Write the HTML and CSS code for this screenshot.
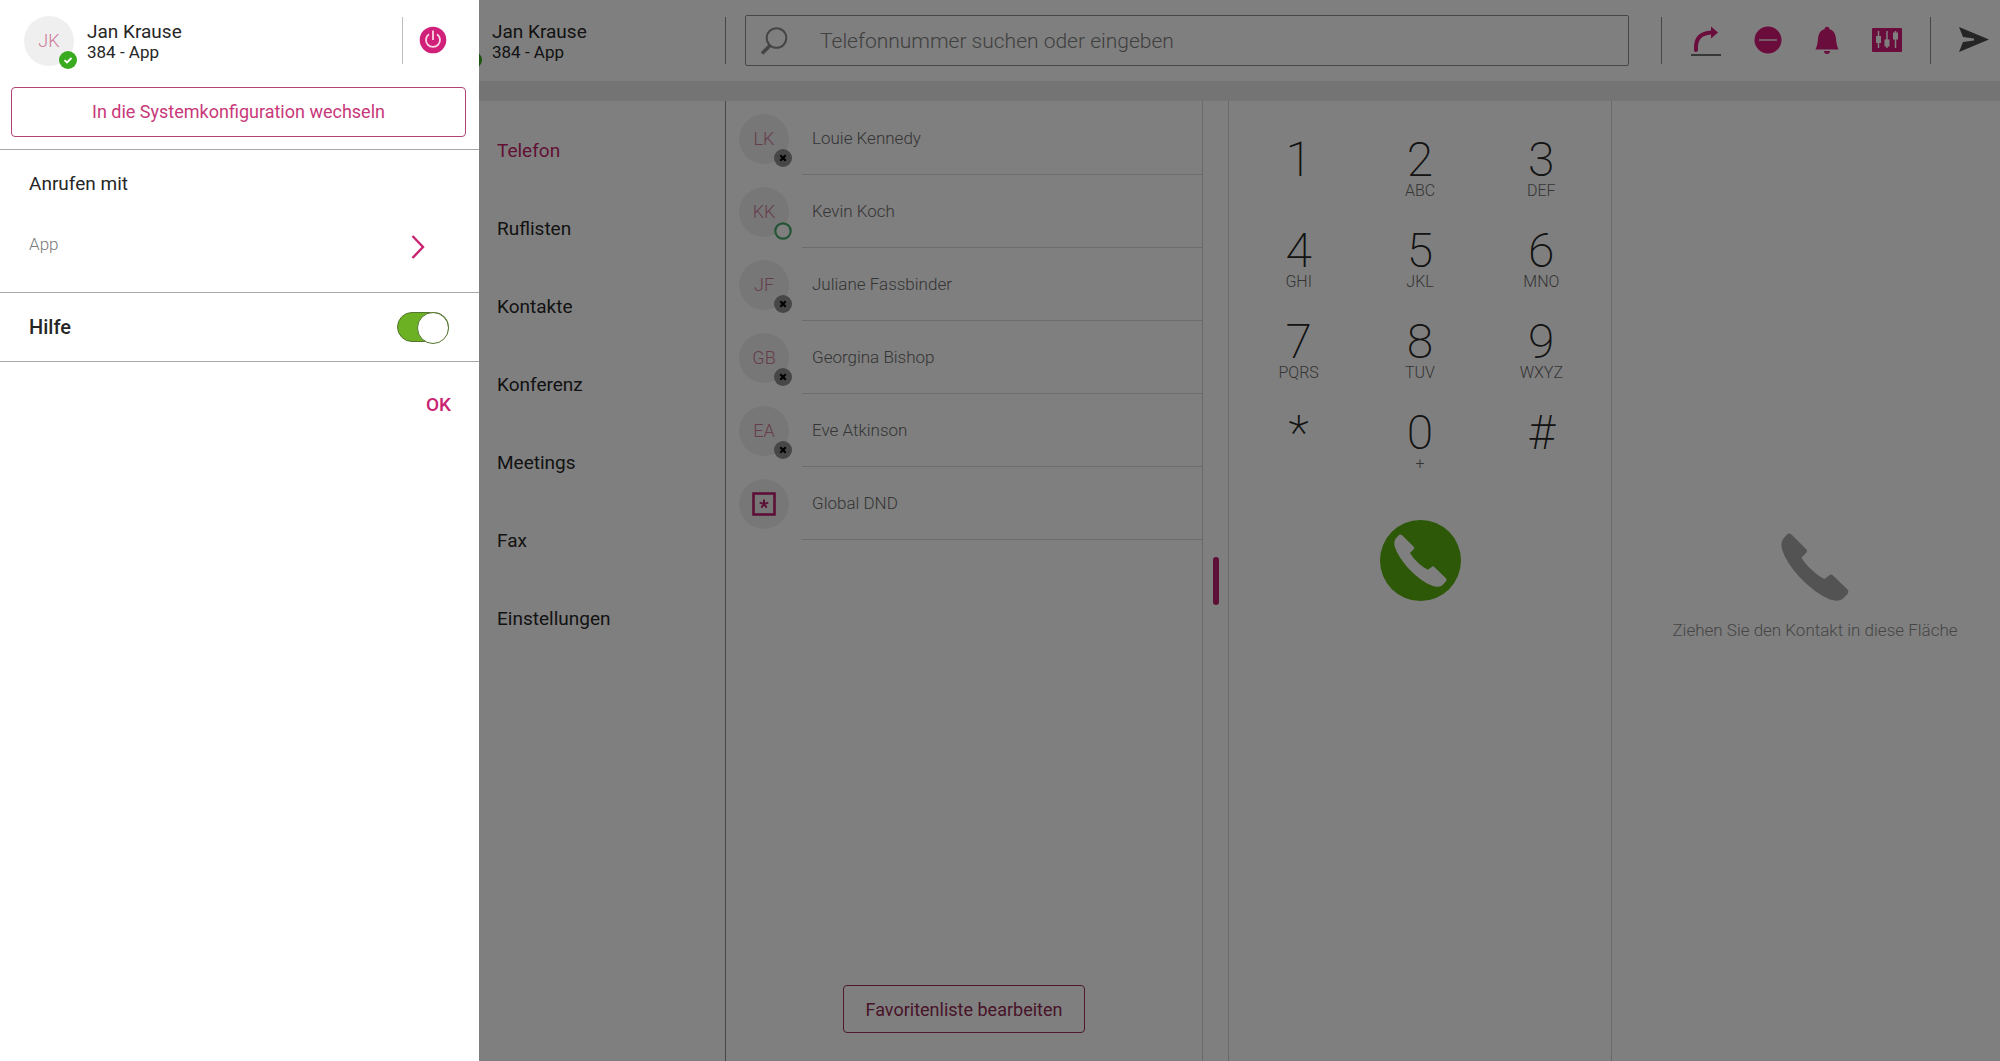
FILE: index.html
```html
<!DOCTYPE html>
<html lang="de">
<head>
    <meta charset="UTF-8">
    <meta name="viewport" content="width=device-width, initial-scale=1.0">
    <title>Telefon</title>
    <link rel="stylesheet" href="styles.css">
</head>
<body>
    <!-- Symbole, die mehrfach vorkommen -->
    <svg class="symbols" aria-hidden="true">
        <symbol id="handset" viewBox="0 0 68 68">
            <path d="M6 1.500Q8-.5 10.500 1.500L25 16Q27 18 25 20L20.500 24.500Q24 31 31.500 37.500Q38 43.500 43.500 46L48 42.500Q50 40.500 52 42.500L66 56Q68.500 58.500 66.500 61L61.500 66Q57 69 49 66.500Q34 60.500 18 43.500Q5 29 1 16.500Q-.5 10 2 6Z"/>
        </symbol>
        <symbol id="offline" viewBox="0 0 18 18">
            <circle cx="9" cy="9" r="9" fill="#8f8f8f"/>
            <path d="M6.300 6.300l5.400 5.400M11.700 6.300l-5.400 5.400" stroke="#000" stroke-width="2.200"/>
        </symbol>
        <symbol id="free" viewBox="0 0 18 18">
            <circle cx="9" cy="9" r="7.700" fill="#fff" stroke="#46a868" stroke-width="2.200"/>
        </symbol>
        <symbol id="online" viewBox="0 0 18 18">
            <circle cx="9" cy="9" r="9" fill="#3aaa20"/>
            <path d="M5.500 9.200l2.500 2.300 4.500-4.500" fill="none" stroke="#fff" stroke-width="1.800"/>
        </symbol>
    </svg>

    <div class="app">
        <header class="topbar">
            <div class="user">
                <span class="avatar">JK<svg class="badge"><use href="#online"/></svg></span>
                <div class="user-text">
                    <div class="user-name">Jan Krause</div>
                    <div class="user-line">384 - App</div>
                </div>
            </div>
            <div class="search">
                <svg width="28" height="28" viewBox="0 0 28 28" fill="none" stroke="#8a8a8a">
                    <circle cx="16.500" cy="11" r="9.800" stroke-width="2"/>
                    <path d="M10 18.500L2 26.500" stroke-width="3.500"/>
                </svg>
                <input type="text" placeholder="Telefonnummer suchen oder eingeben" aria-label="Telefonnummer suchen oder eingeben">
            </div>
            <div class="tools">
                <button type="button" aria-label="Rufumleitung">
                    <svg width="32" height="32" viewBox="0 0 32 32">
                        <path d="M6 26C5 14 11 8.500 23 8.500" fill="none" stroke="#d61a78" stroke-width="4" stroke-linecap="round"/>
                        <path d="M21 2.500L28 8.500L21 14.500Z" fill="#d61a78"/>
                        <path d="M1 31h30" stroke="#6e6e6e" stroke-width="2"/>
                    </svg>
                </button>
                <button type="button" aria-label="Anrufschutz">
                    <svg width="28" height="28" viewBox="0 0 28 28">
                        <circle cx="14" cy="14" r="13.500" fill="#d61a78"/>
                        <path d="M5 14h18" stroke="#f5b0d0" stroke-width="2"/>
                    </svg>
                </button>
                <button type="button" aria-label="Klingel">
                    <svg width="26" height="28" viewBox="-1 0 26 28" fill="#d61a78">
                        <path d="M9.500 3.200a2.500 2.500 0 0 1 5 0C19 4.500 20.500 8 21 12.500C21.300 17.500 22 20 23.500 23.500H.5C2 20 2.700 17.500 3 12.500C3.500 8 5 4.500 9.500 3.200Z"/>
                        <path d="M9 25h6q0 3-3 3t-3-3Z"/>
                    </svg>
                </button>
                <button type="button" aria-label="Audioeinstellungen">
                    <svg width="30" height="24" viewBox="0 0 30 24">
                        <rect x="0" y="0" width="30" height="24" rx="1" fill="#d61a78"/>
                        <path d="M6.500 3v17M15 3v17M23.500 3v17" stroke="#fff" stroke-width="1.500"/>
                        <path d="M4 8h5v7H4zM12.500 11.500h5v7h-5zM21 4.500h5v7h-5z" fill="#fff"/>
                    </svg>
                </button>
            </div>
            <button type="button" class="send" aria-label="Senden">
                <svg width="32" height="26" viewBox="0 0 32 26"><path d="M1 0L31 12.500L1 25L5 15L16 13.500V11.500L5 10Z" fill="#4a4a4a"/></svg>
            </button>
        </header>

        <main class="content">
            <nav class="menu">
                <a href="#" class="active">Telefon</a>
                <a href="#">Ruflisten</a>
                <a href="#">Kontakte</a>
                <a href="#">Konferenz</a>
                <a href="#">Meetings</a>
                <a href="#">Fax</a>
                <a href="#">Einstellungen</a>
            </nav>

            <section class="favorites">
                <ul class="contacts">
                    <li><span class="avatar">LK<svg class="badge"><use href="#offline"/></svg></span><span class="contact-name">Louie Kennedy</span></li>
                    <li><span class="avatar">KK<svg class="badge"><use href="#free"/></svg></span><span class="contact-name">Kevin Koch</span></li>
                    <li><span class="avatar">JF<svg class="badge"><use href="#offline"/></svg></span><span class="contact-name">Juliane Fassbinder</span></li>
                    <li><span class="avatar">GB<svg class="badge"><use href="#offline"/></svg></span><span class="contact-name">Georgina Bishop</span></li>
                    <li><span class="avatar">EA<svg class="badge"><use href="#offline"/></svg></span><span class="contact-name">Eve Atkinson</span></li>
                    <li>
                        <span class="avatar">
                            <svg width="24" height="24" viewBox="0 0 24 24" fill="none" stroke="#b8206a">
                                <rect x="1.500" y="1.500" width="21" height="21" stroke-width="2.600"/>
                                <path d="M12 12V7.500M12 12L7.700 10.600M12 12L16.300 10.600M12 12L9.300 15.700M12 12L14.700 15.700" stroke-width="2"/>
                            </svg>
                        </span>
                        <span class="contact-name">Global DND</span>
                    </li>
                </ul>
                <button type="button" class="outline-button edit-button">Favoritenliste bearbeiten</button>
            </section>

            <div class="splitter"><span class="handle"></span></div>

            <section class="dialer">
                <div class="keys">
                    <button type="button">1<small></small></button>
                    <button type="button">2<small>ABC</small></button>
                    <button type="button">3<small>DEF</small></button>
                    <button type="button">4<small>GHI</small></button>
                    <button type="button">5<small>JKL</small></button>
                    <button type="button">6<small>MNO</small></button>
                    <button type="button">7<small>PQRS</small></button>
                    <button type="button">8<small>TUV</small></button>
                    <button type="button">9<small>WXYZ</small></button>
                    <button type="button">*<small></small></button>
                    <button type="button">0<small>+</small></button>
                    <button type="button">#<small></small></button>
                </div>
                <button type="button" class="call" aria-label="Anrufen">
                    <svg width="53" height="53"><use href="#handset"/></svg>
                </button>
            </section>

            <section class="drop-area">
                <svg width="68" height="68"><use href="#handset"/></svg>
                <p>Ziehen Sie den Kontakt in diese Fläche</p>
            </section>
        </main>
    </div>

    <div class="overlay"></div>

    <aside class="drawer">
        <div class="drawer-head">
            <div class="user">
                <span class="avatar">JK<svg class="badge"><use href="#online"/></svg></span>
                <div class="user-text">
                    <div class="user-name">Jan Krause</div>
                    <div class="user-line">384 - App</div>
                </div>
            </div>
            <button type="button" class="power" aria-label="Abmelden">
                <svg width="28" height="28" viewBox="0 0 28 28">
                    <circle cx="14" cy="14" r="13.300" fill="#d0207a"/>
                    <path d="M10 8.200A7 7 0 1 0 18 8.200M14 4.500V14" fill="none" stroke="#fbd5e6" stroke-width="1.800"/>
                </svg>
            </button>
        </div>
        <button type="button" class="outline-button config-button">In die Systemkonfiguration wechseln</button>
        <section class="call-with">
            <h2>Anrufen mit</h2>
            <button type="button" class="device">
                App
                <svg width="14" height="26" viewBox="0 0 14 26"><path d="M1.500 2L12 13L1.500 24" fill="none" stroke="#c92471" stroke-width="2.400"/></svg>
            </button>
        </section>
        <label class="help">
            Hilfe
            <input type="checkbox" class="toggle" checked>
        </label>
        <button type="button" class="ok">OK</button>
    </aside>
</body>
</html>
```

FILE: styles.css
```css
* {
    box-sizing: border-box;
}

body {
    margin: 0;
    font-family: Roboto, "Liberation Sans", sans-serif;
    font-size: 19px;
    color: #262626;
    background-color: white;
}

button {
    padding: 0;
    border: none;
    background: none;
    font: inherit;
    color: inherit;
    cursor: pointer;
}

svg {
    display: block;
}

.symbols {
    position: absolute;
    width: 0;
    height: 0;
}

/* App */
.app {
    display: flex;
    flex-direction: column;
    min-height: 100vh;
    padding-left: 405px;
}

.topbar {
    display: flex;
    align-items: center;
    height: 81px;
    padding-right: 10px;
}

.user {
    display: flex;
    align-items: center;
    gap: 13px;
    width: 321px;
    height: 47px;
    padding-left: 24px;
    border-right: 1px solid #8c8c8c;
}

.user-name {
    font-size: 19px;
    line-height: 22px;
}

.user-line {
    font-size: 17px;
    line-height: 18px;
}

.avatar {
    position: relative;
    display: flex;
    align-items: center;
    justify-content: center;
    flex: none;
    width: 50px;
    height: 50px;
    border-radius: 50%;
    background-color: #efefef;
    color: #cc7a98;
    font-size: 18px;
    font-weight: 300;
}

.badge {
    position: absolute;
    right: -3px;
    bottom: -3px;
    width: 18px;
    height: 18px;
}

.search {
    display: flex;
    align-items: center;
    flex: 1;
    gap: 32px;
    height: 51px;
    margin-left: 19px;
    padding: 0 14px;
    border: 1px solid #8c8c8c;
    border-radius: 2px;
}

.search input {
    flex: 1;
    min-width: 0;
    padding: 0;
    border: none;
    outline: none;
    font: inherit;
    font-size: 21px;
    font-weight: 300;
}

.search input::placeholder {
    color: #808080;
    opacity: 1;
}

.tools {
    display: flex;
    align-items: center;
    gap: 32px;
    height: 47px;
    margin-left: 32px;
    padding: 0 28px 2px;
    border-left: 1px solid #8c8c8c;
    border-right: 1px solid #8c8c8c;
}

.send {
    margin-left: 27px;
    padding-bottom: 2px;
}

.content {
    display: grid;
    grid-template-columns: 321px 476fr 27px 383fr 388fr;
    flex: 1;
    border-top: 20px solid #e9e9e9;
}

.menu {
    padding: 11px 0 0 92px;
    border-right: 1px solid #8c8c8c;
}

.menu a {
    display: block;
    line-height: 78px;
    color: #262626;
    text-decoration: none;
}

.menu .active {
    color: #c42468;
}

.favorites {
    display: flex;
    flex-direction: column;
    align-items: center;
    justify-content: space-between;
    padding-bottom: 28px;
}

.contacts {
    width: 100%;
    margin: 0;
    padding: 1px 0 0 13px;
    list-style: none;
}

.contacts li {
    display: flex;
    align-items: center;
    gap: 13px;
    height: 73px;
}

.contact-name {
    flex: 1;
    padding-left: 10px;
    border-bottom: 1px solid #d8d8d8;
    color: #6a6a6a;
    font-size: 17px;
    font-weight: 300;
    line-height: 72px;
}

.outline-button {
    border: 1px solid #b04478;
    border-radius: 4px;
    color: #c8387a;
    font-size: 18px;
}

.edit-button {
    height: 48px;
    padding: 0 22px;
    border-color: #a03060;
    color: #902850;
}

.splitter {
    display: flex;
    align-items: center;
    justify-content: center;
    border-left: 1px solid #d2d2d2;
    border-right: 1px solid #d2d2d2;
}

.handle {
    width: 6px;
    height: 48px;
    border-radius: 3px;
    background-color: #b8206a;
}

.dialer {
    display: flex;
    flex-direction: column;
    align-items: center;
    gap: 27px;
    padding: 28px 9px 0;
    border-right: 1px solid #d2d2d2;
}

.keys {
    display: grid;
    grid-template-columns: repeat(3, 1fr);
    width: 100%;
}

.keys button {
    display: flex;
    flex-direction: column;
    align-items: center;
    height: 91px;
    padding-top: 9px;
    font-size: 48px;
    font-weight: 200;
    line-height: 44px;
}

.keys small {
    color: #6a6a6a;
    font-size: 16px;
    font-weight: 300;
    line-height: 18px;
}

.call {
    display: flex;
    align-items: center;
    justify-content: center;
    width: 81px;
    height: 81px;
    border-radius: 50%;
    background-color: #58b010;
    fill: white;
}

.drop-area {
    display: flex;
    flex-direction: column;
    align-items: center;
    justify-content: center;
    gap: 18px;
    padding: 12px 0 0 18px;
    color: #8c8c8c;
    fill: #a6a6a6;
    font-weight: 300;
}

.drop-area p {
    margin: 0;
    font-size: 17px;
    line-height: 22px;
}

.overlay {
    position: fixed;
    inset: 0;
    background-color: rgba(0, 0, 0, 0.5);
}

/* Seitenleiste */
.drawer {
    position: fixed;
    top: 0;
    bottom: 0;
    left: 0;
    width: 479px;
    background-color: white;
}

.drawer-head {
    display: flex;
    align-items: center;
    height: 81px;
}

.drawer .user {
    width: 403px;
    border-color: #bdbdbd;
}

.power {
    margin-left: 16px;
    padding-bottom: 2px;
}

.config-button {
    display: block;
    width: calc(100% - 24px);
    height: 50px;
    margin: 6px 12px 12px 11px;
    padding-bottom: 2px;
}

.call-with {
    height: 144px;
    padding: 22px 54px 0 29px;
    border-top: 1px solid #a8a8a8;
    border-bottom: 1px solid #a8a8a8;
}

.call-with h2 {
    margin: 0 0 38px;
    font-size: 19px;
    font-weight: 400;
    line-height: 24px;
}

.device {
    display: flex;
    justify-content: space-between;
    width: 100%;
    color: #7a7a7a;
    font-size: 17px;
    font-weight: 300;
}

.help {
    display: flex;
    align-items: center;
    justify-content: space-between;
    height: 69px;
    padding: 0 30px 0 29px;
    border-bottom: 1px solid #a8a8a8;
    font-size: 20px;
    font-weight: 500;
}

.toggle {
    display: flex;
    justify-content: flex-end;
    width: 52px;
    height: 30px;
    margin: 0;
    border: 1px solid #55752e;
    border-radius: 15px;
    background-color: #6bb123;
    appearance: none;
}

.toggle:not(:checked) {
    justify-content: flex-start;
    background-color: #b0b0b0;
}

.toggle::before {
    content: "";
    width: 30px;
    height: 30px;
    margin: -1px;
    border: 1px solid #55752e;
    border-radius: 50%;
    background-color: white;
}

.ok {
    display: block;
    margin: 31px 28px 0 auto;
    color: #c92471;
    font-weight: 500;
}
```
